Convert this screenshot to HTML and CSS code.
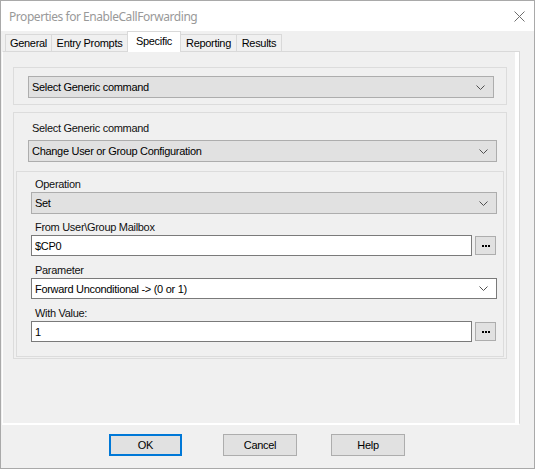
FILE: index.html
```html
<!DOCTYPE html>
<html>
<head>
<meta charset="utf-8">
<link rel="stylesheet" href="styles.css">
</head>
<body>
<div class="window">
  <div class="titlebar">
    <span class="title">Properties for EnableCallForwarding</span>
    <svg class="close" width="11" height="11" viewBox="0 0 11 11"><path d="M0.5 0.5 L10.5 10.5 M10.5 0.5 L0.5 10.5" stroke="#6e6e6e" stroke-width="1" fill="none"/></svg>
  </div>
  <div class="tabs">
    <div class="tab t1">General</div>
    <div class="tab t2">Entry Prompts</div>
    <div class="tab t3 sel">Specific</div>
    <div class="tab t4">Reporting</div>
    <div class="tab t5">Results</div>
  </div>
  <div class="page">
    <div class="group g1">
      <div class="combo c1"><span>Select Generic command</span><svg class="chev" width="9" height="5" viewBox="0 0 9 5"><path d="M0.5 0.5 L4.5 4.5 L8.5 0.5" stroke="#505050" fill="none"/></svg></div>
    </div>
    <div class="group g2">
      <div class="label l0">Select Generic command</div>
      <div class="combo c2"><span>Change User or Group Configuration</span><svg class="chev" width="9" height="5" viewBox="0 0 9 5"><path d="M0.5 0.5 L4.5 4.5 L8.5 0.5" stroke="#505050" fill="none"/></svg></div>
      <div class="group g3">
        <div class="label l1">Operation</div>
        <div class="combo c3"><span>Set</span><svg class="chev" width="9" height="5" viewBox="0 0 9 5"><path d="M0.5 0.5 L4.5 4.5 L8.5 0.5" stroke="#505050" fill="none"/></svg></div>
        <div class="label l2">From User\Group Mailbox</div>
        <div class="row">
          <div class="textbox"><span>$CP0</span></div>
          <div class="dots"><i></i><i></i><i></i></div>
        </div>
        <div class="label l3">Parameter</div>
        <div class="combo c4 white"><span>Forward Unconditional -&gt; (0 or 1)</span><svg class="chev" width="9" height="5" viewBox="0 0 9 5"><path d="M0.5 0.5 L4.5 4.5 L8.5 0.5" stroke="#505050" fill="none"/></svg></div>
        <div class="label l4">With Value:</div>
        <div class="row">
          <div class="textbox"><span>1</span></div>
          <div class="dots"><i></i><i></i><i></i></div>
        </div>
      </div>
    </div>
  </div>
  <div class="buttons">
    <div class="btn ok">OK</div>
    <div class="btn cancel">Cancel</div>
    <div class="btn help">Help</div>
  </div>
</div>
</body>
</html>
```
FILE: styles.css
```css
* { box-sizing: border-box; }
html, body { margin: 0; padding: 0; background: #f0f0f0; }
body { font-family: "Liberation Sans", Arial, sans-serif; font-size: 11px; color: #000; letter-spacing: -0.3px; }

.window {
  width: 535px; height: 469px;
  border: 1px solid #a9a9a9;
  background: #f0f0f0;
  display: flex; flex-direction: column;
}
.titlebar {
  height: 30px; background: #fff;
  display: flex; align-items: center; justify-content: space-between;
  padding: 0 9px 0 8px;
}
.title { font-family: "Noto Sans", "Open Sans", sans-serif; font-size: 12px; color: #999; letter-spacing: -0.45px; }
.close { margin-top: 1px; }

.tabs { display: flex; align-items: flex-end; height: 20px; padding-left: 4px; }
.tab {
  height: 17px; margin-left: -1px;
  border: 1px solid #d9d9d9; border-bottom: none;
  text-align: center; line-height: 16px;
  background: #f0f0f0;
}
.t1 { width: 47px; margin-left: 0; }
.t2 { width: 77px; }
.t3 { width: 54px; }
.t4 { width: 57px; }
.t5 { width: 46px; }
.tab.sel {
  height: 21px; margin-bottom: -1px; background: #fff;
  line-height: 18px; z-index: 1;
}

.page {
  width: 518px; height: 374px; margin-left: 1px;
  border-top: 1px solid #d9d9d9; border-right: 1px solid #d9d9d9;
  border-left: 1px solid #fff; border-bottom: 2px solid #fff;
  box-shadow: inset -4px 0 0 #fff;
  padding: 15px 0 0 10px;
}
.group { border: 1px solid #dcdcdc; }
.g1 { width: 494px; height: 38px; padding: 8px 0 0 14px; }
.g2 { width: 494px; height: 247px; margin-top: 7px; padding: 0; }
.g2 > .label, .g2 > .combo { margin-left: 14px; }
.g3 { width: 488px; height: 186px; margin: 9px 0 0 2px; padding: 0 0 0 14px; }

.label { height: 13px; line-height: 13px; padding-left: 4px; color: #111; }
.l0 { margin-top: 9px; }
.l1 { margin-top: 6px; }
.l2 { margin-top: 7px; }
.l3 { margin-top: 8px; }
.l4 { margin-top: 8px; }

.combo {
  height: 22px; width: 466px;
  background: #e1e1e1; border: 1px solid #adadad;
  display: flex; align-items: center; justify-content: space-between;
  padding: 0 8px 0 3px;
}
.c1 { width: 466px; }
.c2 { width: 469px; margin-top: 5px; }
.c3 { margin-top: 1px; }
.c4 { margin-top: 1px; height: 21px; }
.combo.white { background: #fff; border-color: #7a7a7a; }

.row { display: flex; align-items: center; margin-top: 1px; height: 21px; }
.textbox {
  width: 441px; height: 21px; background: #fff; border: 1px solid #7a7a7a;
  padding-left: 3px; display: flex; align-items: center;
}
.dots {
  width: 21px; height: 19px; margin-left: 3px;
  background: #e1e1e1; border: 1px solid #adadad;
  display: flex; align-items: center; justify-content: center; gap: 1px;
  padding-top: 1px;
}
.dots i { display: block; width: 2px; height: 2px; background: #000; }

.buttons { display: flex; margin-top: 9px; padding-left: 108px; }
.btn {
  height: 22px; width: 74px;
  background: #e1e1e1; border: 1px solid #adadad;
  display: flex; align-items: center; justify-content: center;
}
.ok { width: 73px; border: 2px solid #0078d7; }
.cancel { margin-left: 41px; }
.help { margin-left: 34px; }
```
